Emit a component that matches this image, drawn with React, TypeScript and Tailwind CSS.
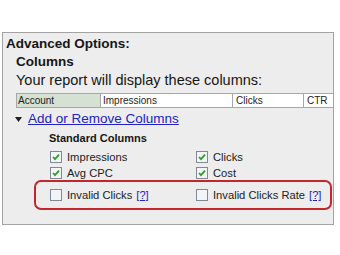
const font = { fontFamily: '"Liberation Sans", Arial, sans-serif' };

function Box({ checked }: { checked?: boolean }) {
  return (
    <svg width="12" height="12" viewBox="0 0 12 12" className="shrink-0">
      <rect x="0.5" y="0.5" width="11" height="11" fill="#f3f4f6" stroke="#7f8a99" />
      {checked && <path d="M3 6 L5 8.2 L9 3.6" fill="none" stroke="#2f9e2f" strokeWidth="1.8" />}
    </svg>
  );
}

function Item({ label, checked, help }: { label: string; checked?: boolean; help?: boolean }) {
  return (
    <div className="flex items-center gap-[5px]">
      <Box checked={checked} />
      <span className="text-[11.2px] leading-[14px] text-[#222]">
        {label}
        {help && <span className="ml-[4px] text-[#2424c8] underline">[?]</span>}
      </span>
    </div>
  );
}

export default function App() {
  return (
    <div className="h-[255px] w-[340px] bg-white pt-[32px] pl-[2px]" style={font}>
      <div className="h-[193px] w-[332px] overflow-hidden border border-[#a3a3a3] bg-[#ededed] text-[#161616]">
        <div className="pt-[3px] pl-[3px] text-[13.5px] font-bold leading-[16px]">Advanced Options:</div>
        <div className="mt-[2px] pl-[13px] text-[13.5px] font-bold leading-[16px]">Columns</div>
        <div className="mt-[2px] pl-[13px] text-[14.5px] leading-[16px]">Your report will display these columns:</div>

        <div className="mt-[5px] ml-[13px] flex h-[15px] w-[340px] text-[10px] leading-[13px] text-[#222]">
          <div className="w-[85px] border border-[#a7a7a7] bg-[#d5e1d3] pl-[1px]">Account</div>
          <div className="w-[132px] border border-l-0 border-[#a7a7a7] bg-white pl-[2px]">Impressions</div>
          <div className="w-[71px] border border-l-0 border-[#a7a7a7] bg-white pl-[3px]">Clicks</div>
          <div className="flex-1 border border-l-0 border-[#a7a7a7] bg-white pl-[3px]">CTR</div>
        </div>

        <div className="mt-[3px] flex h-[16px] items-center pl-[12px]">
          <svg width="7" height="5" viewBox="0 0 7 5" className="mr-[6px]">
            <path d="M0 0 L7 0 L3.5 5 Z" fill="#222" />
          </svg>
          <span className="text-[13.5px] leading-[16px] text-[#2222c6] underline">Add or Remove Columns</span>
        </div>

        <div className="mt-[4px] pl-[46px] text-[11px] font-bold leading-[14px]">Standard Columns</div>

        <div className="mt-[3px] grid grid-cols-[146px_1fr] pl-[47px]">
          <div className="flex h-[17px] items-center"><Item label="Impressions" checked /></div>
          <div className="flex h-[17px] items-center"><Item label="Clicks" checked /></div>
          <div className="flex h-[15px] items-center"><Item label="Avg CPC" checked /></div>
          <div className="flex h-[15px] items-center"><Item label="Cost" checked /></div>
        </div>

        <div className="ml-[31px] grid h-[30px] w-[298px] grid-cols-[146px_1fr] items-center rounded-[7px] border-2 border-[#c1272d] pl-[14px]">
          <Item label="Invalid Clicks" help />
          <Item label="Invalid Clicks Rate" help />
        </div>
      </div>
    </div>
  );
}
